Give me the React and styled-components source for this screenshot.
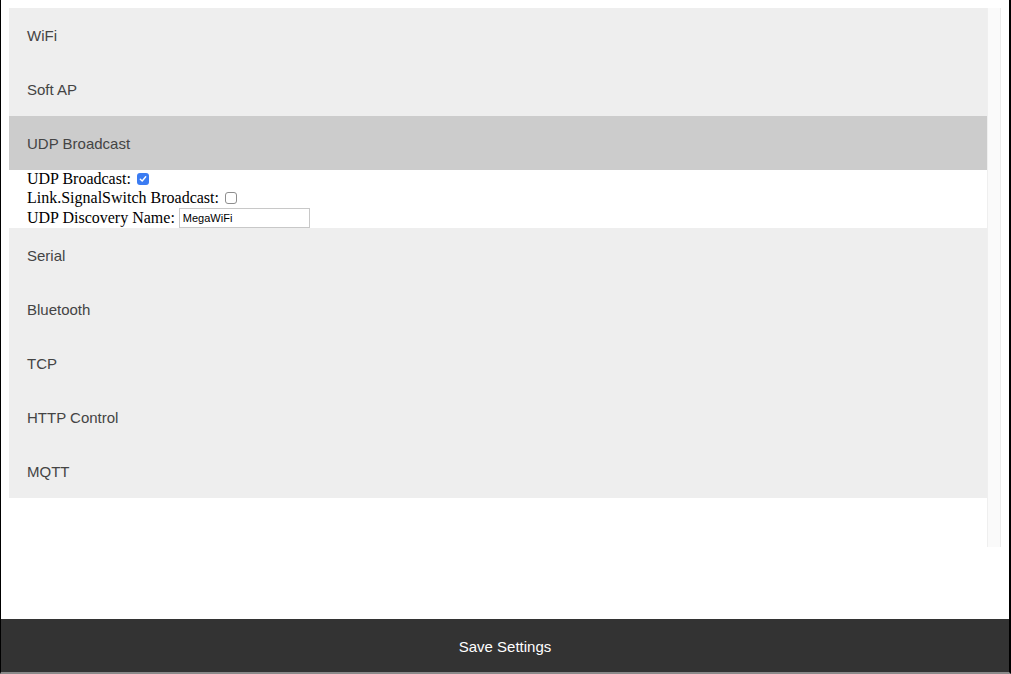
import React, { useState } from "react";
import styled, { createGlobalStyle } from "styled-components";

const Global = createGlobalStyle`
  html, body { margin: 0; padding: 0; background: #fff; }
  body { font-family: "Liberation Serif", "Times New Roman", serif; font-size: 16px; }
  * { box-sizing: border-box; }
`;

const Frame = styled.div`
  height: 674px;
  display: flex;
  flex-direction: column;
  border-left: 1px solid #000;
  border-right: 2px solid #000;
  border-bottom: 2px solid #8a8a8a;
  background: #fff;
  overflow: hidden;
`;

const Content = styled.div`
  display: flex;
  margin: 8px 8px 0 8px;
  height: 539px;
`;

const List = styled.div`
  flex: 1;
  display: flex;
  flex-direction: column;
`;

const ScrollTrack = styled.div`
  width: 14px;
  background: #fafafa;
  border-left: 1px solid #efefef;
  border-right: 1px solid #ececec;
`;

const Header = styled.button`
  display: block;
  width: 100%;
  height: 54px;
  padding: 0 18px;
  border: none;
  outline: none;
  text-align: left;
  font-family: "Liberation Sans", Arial, sans-serif;
  font-size: 15px;
  color: #444;
  background: ${(p) => (p.$active ? "#ccc" : "#eee")};
  cursor: pointer;
`;

const Panel = styled.div`
  padding: 0 18px;
  background: #fff;
  color: #000;
  font-family: "Liberation Serif", "Times New Roman", serif;
  font-size: 16px;
`;

const Row = styled.div`
  display: flex;
  align-items: center;
  height: ${(p) => p.$h || 19}px;
  padding-bottom: ${(p) => (p.$h ? 0 : 1)}px;
  white-space: pre;
`;

const Box = styled.span`
  display: inline-flex;
  align-items: center;
  justify-content: center;
  width: 12px;
  height: 12px;
  margin-left: 2px;
  border-radius: 3px;
  background: ${(p) => (p.$checked ? "#3b7cf2" : "#fff")};
  border: ${(p) => (p.$checked ? "none" : "1px solid #8e8e8e")};
  cursor: pointer;
`;

const TextInput = styled.input`
  width: 131px;
  height: 20px;
  margin: 0;
  padding: 1px 3px;
  border: 1px solid #c8c8c8;
  font-family: "Liberation Sans", Arial, sans-serif;
  font-size: 11px;
  color: #000;
  outline: none;
`;

const Spacer = styled.div`
  flex: 1;
`;

const Footer = styled.button`
  display: block;
  width: 100%;
  height: 53px;
  padding-top: 2px;
  border: none;
  background: #333;
  color: #fff;
  font-family: "Liberation Sans", Arial, sans-serif;
  font-size: 15px;
  text-align: center;
  cursor: pointer;
`;

function Check({ checked, onClick }) {
  return (
    <Box $checked={checked} onClick={onClick}>
      {checked && (
        <svg width="8" height="8" viewBox="0 0 8 8" fill="none">
          <path d="M1.3 4.2 L3.2 6 L6.7 1.8" stroke="#fff" strokeWidth="1.4" strokeLinecap="round" strokeLinejoin="round" />
        </svg>
      )}
    </Box>
  );
}

const sections = ["WiFi", "Soft AP", "UDP Broadcast", "Serial", "Bluetooth", "TCP", "HTTP Control", "MQTT"];

export default function App() {
  const [open, setOpen] = useState("UDP Broadcast");
  const [udp, setUdp] = useState(true);
  const [link, setLink] = useState(false);
  const [name, setName] = useState("MegaWiFi");

  return (
    <>
      <Global />
      <Frame>
        <Content>
          <List>
            {sections.map((s) => (
              <React.Fragment key={s}>
                <Header $active={open === s} onClick={() => setOpen(open === s ? null : s)}>
                  {s}
                </Header>
                {open === s && s === "UDP Broadcast" && (
                  <Panel>
                    <Row>
                      {"UDP Broadcast: "}
                      <Check checked={udp} onClick={() => setUdp(!udp)} />
                    </Row>
                    <Row>
                      {"Link.SignalSwitch Broadcast: "}
                      <Check checked={link} onClick={() => setLink(!link)} />
                    </Row>
                    <Row $h={20}>
                      {"UDP Discovery Name: "}
                      <TextInput value={name} onChange={(e) => setName(e.target.value)} />
                    </Row>
                  </Panel>
                )}
              </React.Fragment>
            ))}
          </List>
          <ScrollTrack />
        </Content>
        <Spacer />
        <Footer>Save Settings</Footer>
      </Frame>
    </>
  );
}
